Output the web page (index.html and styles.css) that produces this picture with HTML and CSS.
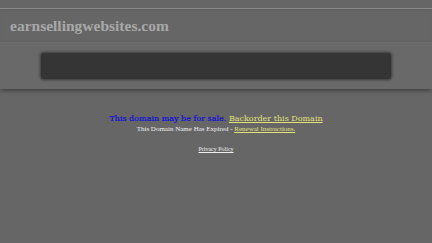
FILE: index.html
```html
<!DOCTYPE html>
<html>
<head>
<meta charset="utf-8">
<link rel="stylesheet" href="styles.css">
</head>
<body>
<div class="top"></div>
<div class="header">
  <div class="logo">earnsellingwebsites.com</div>
</div>
<div class="band">
  <div class="bar"></div>
</div>
<div class="content">
  <div class="sale"><span class="blue">This domain may be for sale.</span> <a class="yl" href="#">Backorder this Domain</a></div>
  <div class="expired">This Domain Name Has Expired - <a class="yl" href="#">Renewal Instructions.</a></div>
  <div class="privacy"><a href="#">Privacy Policy</a></div>
</div>
</body>
</html>
```
FILE: styles.css
```css
html, body {
  margin: 0;
  padding: 0;
  background: #666666;
  height: 100%;
}
body {
  font-family: "DejaVu Serif", serif;
}
.top {
  height: 8px;
}
.header {
  border-top: 1px solid #8c8c8c;
  box-shadow: inset 0 1px 1px #5e5e5e;
  height: 33px;
  display: flex;
  align-items: center;
  padding-left: 10px;
  border-bottom: 1px solid #727272;
}
.logo {
  font-family: "Liberation Serif", serif;
  font-weight: bold;
  font-size: 15.5px;
  color: #a8a8a8;
  margin-top: 1px;
}
.band {
  background: #696969;
  height: 46px;
  display: flex;
  align-items: center;
  padding: 0 41px;
  box-shadow: 0 2px 4px rgba(0,0,0,0.35);
}
.bar {
  flex: 1;
  height: 26px;
  background: #353535;
  border-radius: 3px;
  box-shadow: 0 0 3px 1px rgba(0,0,0,0.45);
}
.content {
  text-align: center;
  padding-top: 24px;
}
.sale {
  font-size: 8px;
  line-height: 11px;
}
.blue {
  color: #1010d8;
  -webkit-text-stroke: 0.2px #1010d8;
}
.yl {
  color: #e2e27a;
}
.expired {
  font-family: "Liberation Serif", serif;
  font-size: 7px;
  line-height: 10px;
  color: #f0f0f0;
}
.privacy {
  font-family: "Liberation Serif", serif;
  font-size: 6px;
  margin-top: 12px;
}
.privacy a {
  color: #eeeeee;
}
```
